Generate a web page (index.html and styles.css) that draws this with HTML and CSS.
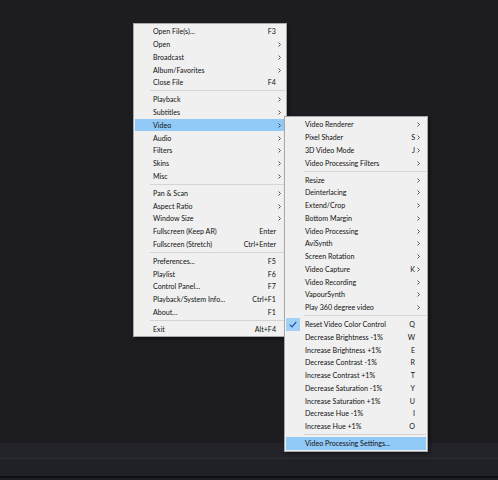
FILE: index.html
```html
<!DOCTYPE html>
<html>
<head>
<meta charset="utf-8">
<link rel="stylesheet" href="styles.css">
</head>
<body>
<div class="app">
  <div class="viewport"></div>
  <div class="band1"></div>
  <div class="band2"></div>
  <div class="band3"></div>
  <div class="band4"></div>
</div>

<div class="menu main">
  <div class="item"><span class="lbl">Open File(s)...</span><span class="key">F3</span><span class="arr"></span></div>
  <div class="item"><span class="lbl">Open</span><span class="key"></span><span class="arr"><svg width="3" height="5" viewBox="0 0 3 5"><polyline points="0.5,0.5 2.5,2.5 0.5,4.5" fill="none" stroke="#444" stroke-width="0.9"/></svg></span></div>
  <div class="item"><span class="lbl">Broadcast</span><span class="key"></span><span class="arr"><svg width="3" height="5" viewBox="0 0 3 5"><polyline points="0.5,0.5 2.5,2.5 0.5,4.5" fill="none" stroke="#444" stroke-width="0.9"/></svg></span></div>
  <div class="item"><span class="lbl">Album/Favorites</span><span class="key"></span><span class="arr"><svg width="3" height="5" viewBox="0 0 3 5"><polyline points="0.5,0.5 2.5,2.5 0.5,4.5" fill="none" stroke="#444" stroke-width="0.9"/></svg></span></div>
  <div class="item"><span class="lbl">Close File</span><span class="key">F4</span><span class="arr"></span></div>
  <div class="sep"></div>
  <div class="item"><span class="lbl">Playback</span><span class="key"></span><span class="arr"><svg width="3" height="5" viewBox="0 0 3 5"><polyline points="0.5,0.5 2.5,2.5 0.5,4.5" fill="none" stroke="#444" stroke-width="0.9"/></svg></span></div>
  <div class="item"><span class="lbl">Subtitles</span><span class="key"></span><span class="arr"><svg width="3" height="5" viewBox="0 0 3 5"><polyline points="0.5,0.5 2.5,2.5 0.5,4.5" fill="none" stroke="#444" stroke-width="0.9"/></svg></span></div>
  <div class="item hl"><span class="lbl">Video</span><span class="key"></span><span class="arr"><svg width="3" height="5" viewBox="0 0 3 5"><polyline points="0.5,0.5 2.5,2.5 0.5,4.5" fill="none" stroke="#444" stroke-width="0.9"/></svg></span></div>
  <div class="item"><span class="lbl">Audio</span><span class="key"></span><span class="arr"><svg width="3" height="5" viewBox="0 0 3 5"><polyline points="0.5,0.5 2.5,2.5 0.5,4.5" fill="none" stroke="#444" stroke-width="0.9"/></svg></span></div>
  <div class="item"><span class="lbl">Filters</span><span class="key"></span><span class="arr"><svg width="3" height="5" viewBox="0 0 3 5"><polyline points="0.5,0.5 2.5,2.5 0.5,4.5" fill="none" stroke="#444" stroke-width="0.9"/></svg></span></div>
  <div class="item"><span class="lbl">Skins</span><span class="key"></span><span class="arr"><svg width="3" height="5" viewBox="0 0 3 5"><polyline points="0.5,0.5 2.5,2.5 0.5,4.5" fill="none" stroke="#444" stroke-width="0.9"/></svg></span></div>
  <div class="item"><span class="lbl">Misc</span><span class="key"></span><span class="arr"><svg width="3" height="5" viewBox="0 0 3 5"><polyline points="0.5,0.5 2.5,2.5 0.5,4.5" fill="none" stroke="#444" stroke-width="0.9"/></svg></span></div>
  <div class="sep"></div>
  <div class="item"><span class="lbl">Pan &amp; Scan</span><span class="key"></span><span class="arr"><svg width="3" height="5" viewBox="0 0 3 5"><polyline points="0.5,0.5 2.5,2.5 0.5,4.5" fill="none" stroke="#444" stroke-width="0.9"/></svg></span></div>
  <div class="item"><span class="lbl">Aspect Ratio</span><span class="key"></span><span class="arr"><svg width="3" height="5" viewBox="0 0 3 5"><polyline points="0.5,0.5 2.5,2.5 0.5,4.5" fill="none" stroke="#444" stroke-width="0.9"/></svg></span></div>
  <div class="item"><span class="lbl">Window Size</span><span class="key"></span><span class="arr"><svg width="3" height="5" viewBox="0 0 3 5"><polyline points="0.5,0.5 2.5,2.5 0.5,4.5" fill="none" stroke="#444" stroke-width="0.9"/></svg></span></div>
  <div class="item"><span class="lbl">Fullscreen (Keep AR)</span><span class="key">Enter</span><span class="arr"></span></div>
  <div class="item"><span class="lbl">Fullscreen (Stretch)</span><span class="key">Ctrl+Enter</span><span class="arr"></span></div>
  <div class="sep"></div>
  <div class="item"><span class="lbl">Preferences...</span><span class="key">F5</span><span class="arr"></span></div>
  <div class="item"><span class="lbl">Playlist</span><span class="key">F6</span><span class="arr"></span></div>
  <div class="item"><span class="lbl">Control Panel...</span><span class="key">F7</span><span class="arr"></span></div>
  <div class="item"><span class="lbl">Playback/System Info...</span><span class="key">Ctrl+F1</span><span class="arr"></span></div>
  <div class="item"><span class="lbl">About...</span><span class="key">F1</span><span class="arr"></span></div>
  <div class="sep"></div>
  <div class="item"><span class="lbl">Exit</span><span class="key">Alt+F4</span><span class="arr"></span></div>
</div>

<div class="menu sub">
  <div class="item"><span class="lbl">Video Renderer</span><span class="key"></span><span class="arr"><svg width="3" height="5" viewBox="0 0 3 5"><polyline points="0.5,0.5 2.5,2.5 0.5,4.5" fill="none" stroke="#444" stroke-width="0.9"/></svg></span></div>
  <div class="item"><span class="lbl">Pixel Shader</span><span class="key">S</span><span class="arr"><svg width="3" height="5" viewBox="0 0 3 5"><polyline points="0.5,0.5 2.5,2.5 0.5,4.5" fill="none" stroke="#444" stroke-width="0.9"/></svg></span></div>
  <div class="item"><span class="lbl">3D Video Mode</span><span class="key">J</span><span class="arr"><svg width="3" height="5" viewBox="0 0 3 5"><polyline points="0.5,0.5 2.5,2.5 0.5,4.5" fill="none" stroke="#444" stroke-width="0.9"/></svg></span></div>
  <div class="item"><span class="lbl">Video Processing Filters</span><span class="key"></span><span class="arr"><svg width="3" height="5" viewBox="0 0 3 5"><polyline points="0.5,0.5 2.5,2.5 0.5,4.5" fill="none" stroke="#444" stroke-width="0.9"/></svg></span></div>
  <div class="sep"></div>
  <div class="item"><span class="lbl">Resize</span><span class="key"></span><span class="arr"><svg width="3" height="5" viewBox="0 0 3 5"><polyline points="0.5,0.5 2.5,2.5 0.5,4.5" fill="none" stroke="#444" stroke-width="0.9"/></svg></span></div>
  <div class="item"><span class="lbl">Deinterlacing</span><span class="key"></span><span class="arr"><svg width="3" height="5" viewBox="0 0 3 5"><polyline points="0.5,0.5 2.5,2.5 0.5,4.5" fill="none" stroke="#444" stroke-width="0.9"/></svg></span></div>
  <div class="item"><span class="lbl">Extend/Crop</span><span class="key"></span><span class="arr"><svg width="3" height="5" viewBox="0 0 3 5"><polyline points="0.5,0.5 2.5,2.5 0.5,4.5" fill="none" stroke="#444" stroke-width="0.9"/></svg></span></div>
  <div class="item"><span class="lbl">Bottom Margin</span><span class="key"></span><span class="arr"><svg width="3" height="5" viewBox="0 0 3 5"><polyline points="0.5,0.5 2.5,2.5 0.5,4.5" fill="none" stroke="#444" stroke-width="0.9"/></svg></span></div>
  <div class="item"><span class="lbl">Video Processing</span><span class="key"></span><span class="arr"><svg width="3" height="5" viewBox="0 0 3 5"><polyline points="0.5,0.5 2.5,2.5 0.5,4.5" fill="none" stroke="#444" stroke-width="0.9"/></svg></span></div>
  <div class="item"><span class="lbl">AviSynth</span><span class="key"></span><span class="arr"><svg width="3" height="5" viewBox="0 0 3 5"><polyline points="0.5,0.5 2.5,2.5 0.5,4.5" fill="none" stroke="#444" stroke-width="0.9"/></svg></span></div>
  <div class="item"><span class="lbl">Screen Rotation</span><span class="key"></span><span class="arr"><svg width="3" height="5" viewBox="0 0 3 5"><polyline points="0.5,0.5 2.5,2.5 0.5,4.5" fill="none" stroke="#444" stroke-width="0.9"/></svg></span></div>
  <div class="item"><span class="lbl">Video Capture</span><span class="key">K</span><span class="arr"><svg width="3" height="5" viewBox="0 0 3 5"><polyline points="0.5,0.5 2.5,2.5 0.5,4.5" fill="none" stroke="#444" stroke-width="0.9"/></svg></span></div>
  <div class="item"><span class="lbl">Video Recording</span><span class="key"></span><span class="arr"><svg width="3" height="5" viewBox="0 0 3 5"><polyline points="0.5,0.5 2.5,2.5 0.5,4.5" fill="none" stroke="#444" stroke-width="0.9"/></svg></span></div>
  <div class="item"><span class="lbl">VapourSynth</span><span class="key"></span><span class="arr"><svg width="3" height="5" viewBox="0 0 3 5"><polyline points="0.5,0.5 2.5,2.5 0.5,4.5" fill="none" stroke="#444" stroke-width="0.9"/></svg></span></div>
  <div class="item"><span class="lbl">Play 360 degree video</span><span class="key"></span><span class="arr"><svg width="3" height="5" viewBox="0 0 3 5"><polyline points="0.5,0.5 2.5,2.5 0.5,4.5" fill="none" stroke="#444" stroke-width="0.9"/></svg></span></div>
  <div class="sep"></div>
  <div class="item"><span class="chk"><svg width="8" height="7" viewBox="0 0 8 7"><polyline points="0.8,3.6 3,5.8 7.2,1" fill="none" stroke="#1a5aa8" stroke-width="1.2"/></svg></span><span class="lbl">Reset Video Color Control</span><span class="key">Q</span><span class="arr"></span></div>
  <div class="item"><span class="lbl">Decrease Brightness -1%</span><span class="key">W</span><span class="arr"></span></div>
  <div class="item"><span class="lbl">Increase Brightness +1%</span><span class="key">E</span><span class="arr"></span></div>
  <div class="item"><span class="lbl">Decrease Contrast -1%</span><span class="key">R</span><span class="arr"></span></div>
  <div class="item"><span class="lbl">Increase Contrast +1%</span><span class="key">T</span><span class="arr"></span></div>
  <div class="item"><span class="lbl">Decrease Saturation -1%</span><span class="key">Y</span><span class="arr"></span></div>
  <div class="item"><span class="lbl">Increase Saturation +1%</span><span class="key">U</span><span class="arr"></span></div>
  <div class="item"><span class="lbl">Decrease Hue -1%</span><span class="key">I</span><span class="arr"></span></div>
  <div class="item"><span class="lbl">Increase Hue +1%</span><span class="key">O</span><span class="arr"></span></div>
  <div class="sep"></div>
  <div class="item hl"><span class="lbl">Video Processing Settings...</span><span class="key"></span><span class="arr"></span></div>
</div>
</body>
</html>
```

FILE: styles.css
```css
html, body {
  margin: 0;
  padding: 0;
}
body {
  width: 498px;
  height: 480px;
  overflow: hidden;
  background: #1c1c21;
  font-family: Lato, "Noto Sans", sans-serif;
  position: relative;
}
.app {
  display: flex;
  flex-direction: column;
  height: 480px;
}
.viewport {
  height: 443px;
  background: #1c1c21;
}
.band1 {
  height: 15px;
  background: #232429;
  border-bottom: 1px solid #2c2d33;
}
.band2 {
  height: 17px;
  background: #202126;
}
.band3 {
  height: 2px;
  background: #0f0f12;
}
.band4 {
  flex: 1;
  background: #1d1e22;
}

.menu {
  position: absolute;
  background: #f0f0f0;
  border: 1px solid #a8a8a8;
  padding: 1px;
  box-sizing: border-box;
  box-shadow: 2px 2px 3px rgba(0,0,0,0.35);
}
.main {
  left: 133px;
  top: 23px;
  width: 154px;
}
.sub {
  left: 284px;
  top: 116px;
  width: 144px;
}
.item {
  display: flex;
  align-items: center;
  box-sizing: border-box;
  height: 12.75px;
  padding-top: 1.2px;
  font-size: 7.1px;
  line-height: 11px;
  color: #111;
  white-space: nowrap;
  position: relative;
}
.main .item {
  padding-left: 18px;
  padding-right: 4px;
}
.sub .item {
  padding-left: 19px;
  padding-right: 6px;
}
.item.hl {
  background: #91c9f7;
}
.lbl {
  flex: 1;
}
.key {
  text-align: right;
}
.arr {
  width: 5px;
  display: flex;
  justify-content: flex-end;
  align-items: center;
}
.arr svg {
  display: block;
}
.chk {
  position: absolute;
  left: 0;
  top: 0;
  width: 14px;
  height: 12.75px;
  background: #a3d0f7;
  display: flex;
  align-items: center;
  justify-content: center;
}
.chk svg {
  display: block;
}
.sep {
  height: 4.25px;
  display: flex;
  align-items: center;
}
.sep::after {
  content: "";
  display: block;
  height: 1px;
  flex: 1;
  background: #d4d4d4;
}
.main .sep {
  padding-left: 15px;
}
.sub .sep {
  padding-left: 18px;
}
```
